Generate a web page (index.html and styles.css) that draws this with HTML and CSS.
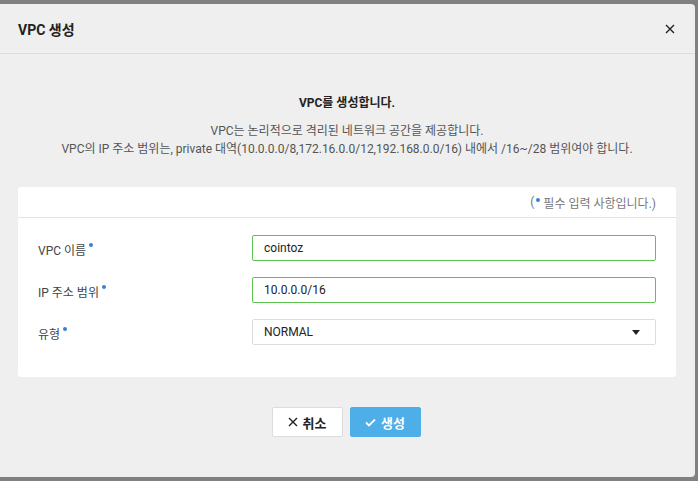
FILE: index.html
```html
<!DOCTYPE html>
<html lang="ko">
<head>
<meta charset="utf-8">
<link rel="stylesheet" href="styles.css">
</head>
<body>
<div class="modal">
  <div class="modal-header">
    <span class="modal-title">VPC 생성</span>
    <span class="close">
      <svg width="10" height="10" viewBox="0 0 10 10"><path d="M1 1L9 9M9 1L1 9" stroke="#222" stroke-width="1.4" fill="none"/></svg>
    </span>
  </div>
  <div class="modal-body">
    <div class="intro">
      <div class="intro-title">VPC를 생성합니다.</div>
      <div class="intro-desc">VPC는 논리적으로 격리된 네트워크 공간을 제공합니다.<br>VPC의 IP 주소 범위는, private 대역(10.0.0.0/8,172.16.0.0/12,192.168.0.0/16) 내에서 /16~/28 범위여야 합니다.</div>
    </div>
    <div class="card">
      <div class="card-head">(<span class="dot"></span>필수 입력 사항입니다.)</div>
      <div class="form">
        <div class="row">
          <div class="label">VPC 이름<span class="req"></span></div>
          <div class="field input valid">cointoz</div>
        </div>
        <div class="row">
          <div class="label">IP 주소 범위<span class="req"></span></div>
          <div class="field input valid">10.0.0.0/16</div>
        </div>
        <div class="row">
          <div class="label">유형<span class="req"></span></div>
          <div class="field select">NORMAL<span class="caret"></span></div>
        </div>
      </div>
    </div>
    <div class="actions">
      <button class="btn btn-cancel"><svg width="10" height="10" viewBox="0 0 10 10"><path d="M1 1L9 9M9 1L1 9" stroke="#222" stroke-width="1.4" fill="none"/></svg>취소</button>
      <button class="btn btn-ok"><svg width="11" height="9" viewBox="0 0 11 9"><path d="M1 4.5L4 7.5L10 1.5" stroke="#fff" stroke-width="1.8" fill="none"/></svg>생성</button>
    </div>
  </div>
</div>
</body>
</html>
```
FILE: styles.css
```css
html, body {
  margin: 0;
  padding: 0;
  background: #808080;
  font-family: Roboto, "Noto Sans CJK KR", sans-serif;
  color: #333;
}
body {
  padding: 4px 3px 4px 0;
  height: 481px;
  box-sizing: border-box;
}
.modal {
  background: #efefef;
  height: 473px;
  border-radius: 0 4px 4px 0;
  display: flex;
  flex-direction: column;
}
.modal-header {
  height: 49px;
  border-bottom: 1px solid #dcdcdc;
  display: flex;
  align-items: center;
  justify-content: space-between;
  padding: 0 20px 0 18px;
}
.modal-title {
  font-size: 14px;
  font-weight: 700;
  color: #222;
}
.close {
  display: flex;
  align-items: center;
}
.modal-body {
  padding: 0 19px 0 18px;
}
.intro {
  text-align: center;
  padding-top: 40px;
  height: 133px;
  box-sizing: border-box;
}
.intro-title {
  font-size: 12px;
  font-weight: 700;
  color: #222;
  line-height: 18px;
}
.intro-desc {
  margin-top: 10px;
  font-size: 12px;
  color: #555;
  line-height: 18px;
}
.card {
  background: #fff;
  border-radius: 3px;
  height: 190px;
}
.card-head {
  height: 30px;
  border-bottom: 1px solid #e3e3e3;
  display: flex;
  align-items: center;
  justify-content: flex-end;
  padding-right: 20px;
  font-size: 12px;
  color: #777;
}
.dot {
  display: inline-block;
  width: 4px;
  height: 4px;
  border-radius: 50%;
  background: #3a7fd5;
  margin: 0 3px 5px 2px;
}
.form {
  padding: 17px 20px 0 20px;
  display: flex;
  flex-direction: column;
  gap: 16px;
}
.row {
  display: flex;
  align-items: center;
  height: 26px;
}
.label {
  width: 214px;
  font-size: 12px;
  color: #444;
  padding-top: 2px;
}
.req {
  display: inline-block;
  width: 4px;
  height: 4px;
  border-radius: 50%;
  background: #3a7fd5;
  margin-left: 3px;
  vertical-align: 8px;
}
.field {
  flex: 1;
  height: 26px;
  box-sizing: border-box;
  display: flex;
  align-items: center;
  padding: 0 11px;
  font-size: 12px;
  color: #222;
  border-radius: 2px;
}
.input.valid {
  border: 1px solid #5cc34f;
}
.select {
  border: 1px solid #dddddd;
  justify-content: space-between;
}
.caret {
  width: 0;
  height: 0;
  border-left: 4px solid transparent;
  border-right: 4px solid transparent;
  border-top: 5px solid #222;
  margin-right: 4px;
}
.actions {
  display: flex;
  justify-content: center;
  gap: 7px;
  padding-top: 30px;
  padding-right: 2px;
}
.btn {
  height: 30px;
  border-radius: 2px;
  font-family: Roboto, "Noto Sans CJK KR", sans-serif;
  font-size: 13px;
  font-weight: 700;
  display: flex;
  align-items: center;
  justify-content: center;
  gap: 5px;
  padding: 0;
  cursor: pointer;
}
.btn-cancel {
  width: 71px;
  background: #fff;
  border: 1px solid #dcdcdc;
  color: #222;
}
.btn-ok {
  width: 71px;
  background: #4eaee8;
  border: 1px solid #4eaee8;
  color: #fff;
}
```
